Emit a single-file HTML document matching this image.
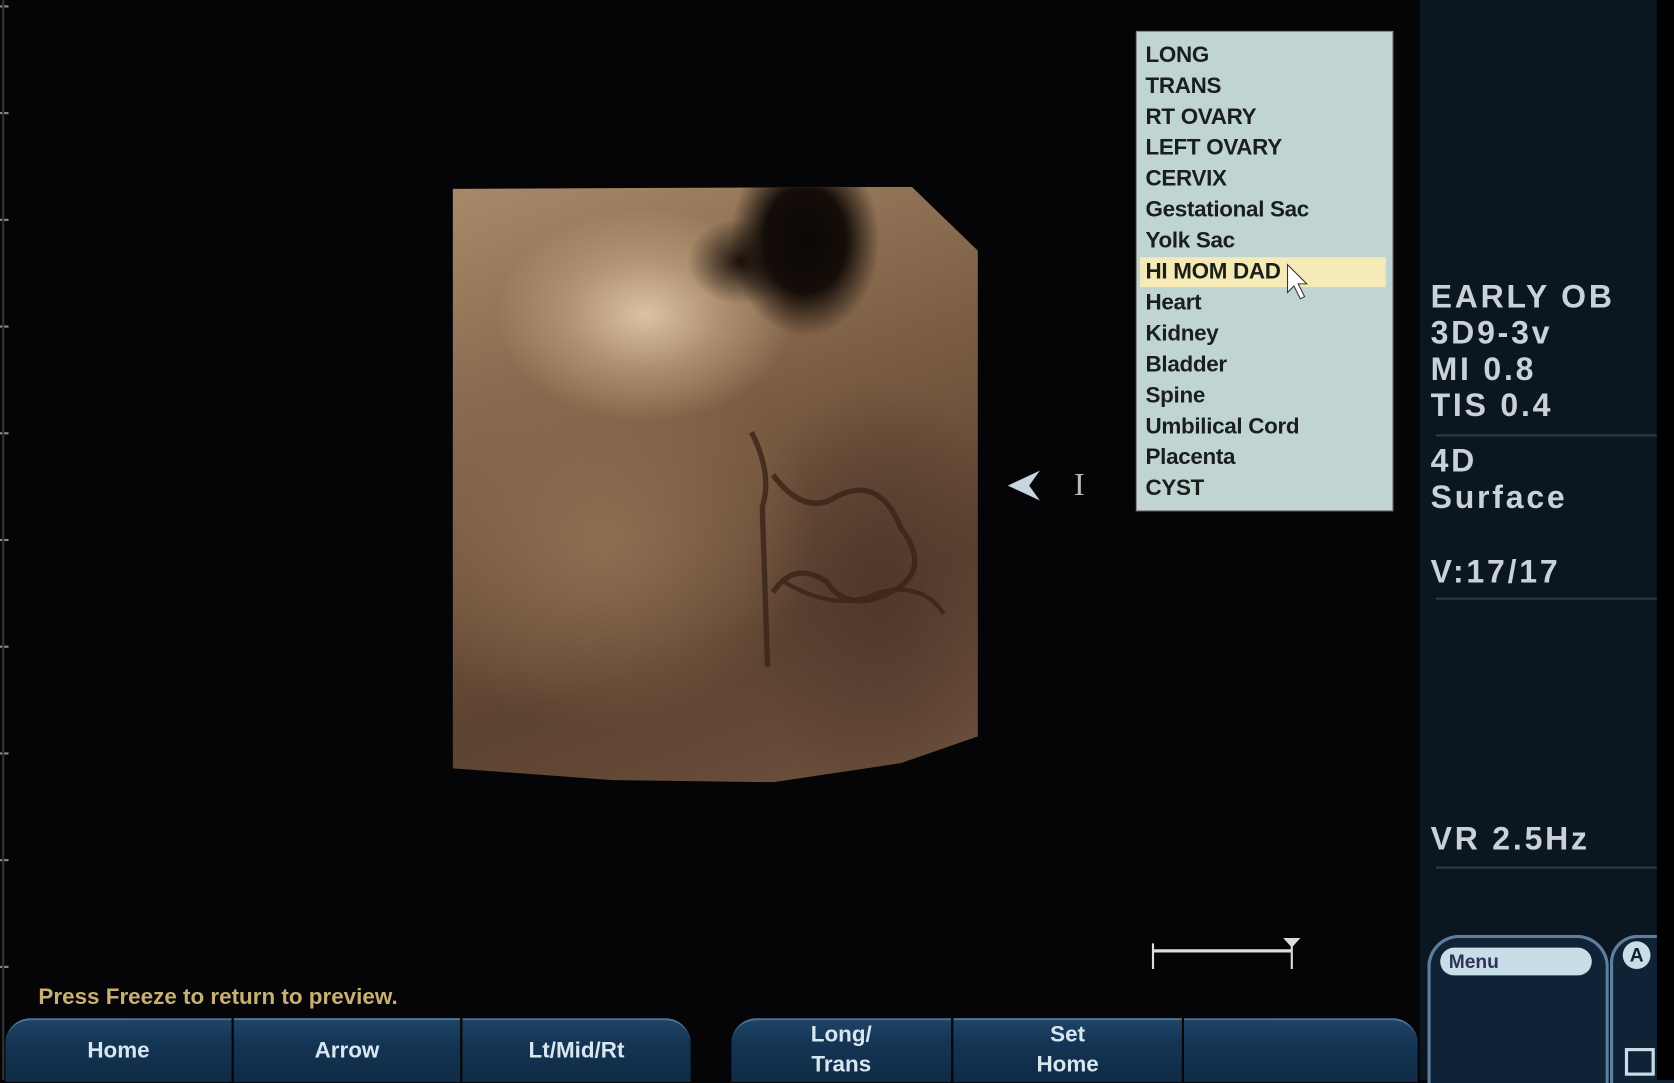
<!DOCTYPE html>
<html><head><style>
html,body{margin:0;padding:0;background:#050507;overflow:hidden}
#w{position:absolute;left:0;top:0;width:1568px;height:1012px;transform-origin:0 0;transform:scale(1.06760,1.06719);background:#050507;font-family:"Liberation Sans",sans-serif}
.a{position:absolute}
.tick{position:absolute;left:0;width:8px;height:2px;background:#8a8a8a}
.menu{left:1064px;top:29px;width:239px;height:448px;background:#bfd4d3;border:1px solid #888}
.mi{position:absolute;left:8px;font-size:21px;font-weight:bold;color:#1a1f1c;letter-spacing:-0.3px;line-height:29px}
.rp{position:absolute;left:1340px;color:#c9d2d6;font-size:30px;font-weight:bold;letter-spacing:2.6px;line-height:34px}
.hr{position:absolute;left:1345px;width:207px;height:2px;background:#2a3a48}
.btn{position:absolute;top:954px;height:58px;background:linear-gradient(#1e4466,#133453 40%,#0f2b45);color:#d8e6f0;font-size:21px;font-weight:bold;text-align:center;border-top:2px solid #4d7394}
</style></head><body><div id="w">
<div class="tick" style="top:5px"></div><div class="tick" style="top:105px"></div><div class="tick" style="top:205px"></div><div class="tick" style="top:305px"></div><div class="tick" style="top:405px"></div><div class="tick" style="top:505px"></div><div class="tick" style="top:605px"></div><div class="tick" style="top:705px"></div><div class="tick" style="top:805px"></div><div class="tick" style="top:905px"></div>
<div class="a" style="left:2px;top:0;width:2px;height:1012px;background:#333"></div>

<!-- 3D image -->
<div class="a" style="left:424px;top:175px;width:492px;height:560px;clip-path:polygon(0 2px,430px 0,492px 60px,492px 515px,420px 540px,300px 558px,150px 556px,0 545px);background:
radial-gradient(ellipse 70px 90px at 330px 50px,#0d0806 0%,#140d08 55%,transparent 100%),
radial-gradient(ellipse 50px 40px at 270px 70px,#1a110b 0%,transparent 100%),
radial-gradient(ellipse 140px 100px at 180px 120px,#dcc3a2 0%,rgba(200,170,135,.6) 50%,transparent 100%),
radial-gradient(ellipse 200px 180px at 140px 330px,#8e6f52 0%,transparent 100%),
radial-gradient(ellipse 130px 200px at 400px 380px,#50382a 0%,transparent 100%),
linear-gradient(160deg,#a7896a 0%,#7c5e44 40%,#5c4230 70%,#705240 100%)"></div>
<svg class="a" style="left:424px;top:175px" width="492" height="560"><g stroke="#3a2418" fill="none" opacity=".8"><path d="M300 270 q30 40 60 20 q40 -20 60 30 q30 40 -10 60 q-40 20 -60 -10 q-30 -20 -50 10" stroke-width="5"/><path d="M310 370 q50 30 90 10 q40 -10 60 20" stroke-width="4"/><path d="M280 230 q20 40 10 70 l5 150" stroke-width="5"/></g></svg>

<!-- menu -->
<div class="a menu">
<div class="a" style="left:3px;top:211px;width:230px;height:28px;background:#f6ebb6"></div>
<div class="mi" style="top:7px">LONG</div>
<div class="mi" style="top:36px">TRANS</div>
<div class="mi" style="top:65px">RT OVARY</div>
<div class="mi" style="top:94px">LEFT OVARY</div>
<div class="mi" style="top:123px">CERVIX</div>
<div class="mi" style="top:152px">Gestational Sac</div>
<div class="mi" style="top:181px">Yolk Sac</div>
<div class="mi" style="top:210px">HI MOM DAD</div>
<div class="mi" style="top:239px">Heart</div>
<div class="mi" style="top:268px">Kidney</div>
<div class="mi" style="top:297px">Bladder</div>
<div class="mi" style="top:326px">Spine</div>
<div class="mi" style="top:355px">Umbilical Cord</div>
<div class="mi" style="top:384px">Placenta</div>
<div class="mi" style="top:413px">CYST</div>
</div>
<svg class="a" style="left:1204px;top:246px" width="30" height="40"><path d="M2 2 L2 28 L8 22 L14 34 L18 32 L12 20 L20 20 Z" fill="#fff" stroke="#333"/></svg>

<svg class="a" style="left:942px;top:438px" width="40" height="35"><path d="M2 17 L32 3 L22 17 L32 31 Z" fill="#c9d6e0"/></svg>
<div class="a" style="left:1006px;top:438px;color:#bbb;font-size:30px;font-family:'Liberation Serif',serif">I</div>
<svg class="a" style="left:1074px;top:876px" width="150" height="40"><line x1="6" y1="15" x2="136" y2="15" stroke="#ddd" stroke-width="3"/><line x1="6" y1="8" x2="6" y2="32" stroke="#ddd" stroke-width="2"/><line x1="136" y1="4" x2="136" y2="32" stroke="#ddd" stroke-width="2"/><path d="M128 3 L144 3 L136 12 Z" fill="#ddd"/></svg>

<div class="a" style="left:36px;top:923px;color:#c7b172;font-size:21px;font-weight:bold">Press Freeze to return to preview.</div>

<!-- right panel -->
<div class="a" style="left:1330px;top:0;width:222px;height:1012px;background:#0b1620"></div>
<div class="rp" style="top:262px">EARLY OB<br>3D9-3v<br>MI 0.8<br>TIS 0.4</div>
<div class="hr" style="top:407px"></div>
<div class="rp" style="top:416px">4D<br>Surface</div>
<div class="rp" style="top:520px">V:17/17</div>
<div class="hr" style="top:560px"></div>
<div class="rp" style="top:770px">VR 2.5Hz</div>
<div class="hr" style="top:812px"></div>
<div class="a" style="left:1337px;top:876px;width:164px;height:136px;border-radius:30px 30px 0 0;border:3px solid #5b7f9d;border-bottom:none;background:#102236"></div>
<div class="a" style="left:1349px;top:888px;width:142px;height:26px;border-radius:13px;background:#c7dde8;color:#335;font-size:18px;font-weight:bold;line-height:26px;padding-left:8px;box-sizing:border-box">Menu</div>
<div class="a" style="left:1508px;top:876px;width:60px;height:136px;border-radius:26px 0 0 0;border:3px solid #5b7f9d;border-right:none;border-bottom:none;background:#102236"></div>
<div class="a" style="left:1520px;top:882px;width:26px;height:26px;border-radius:50%;background:#c7dde8;color:#123;font-weight:bold;text-align:center;line-height:26px;font-size:18px">A</div>
<div class="a" style="left:1522px;top:982px;width:22px;height:20px;border:3px solid #c7dde8"></div>
<div class="a" style="left:1552px;top:0;width:16px;height:1012px;background:#000"></div>

<!-- buttons -->
<div class="btn" style="left:5px;width:212px;border-radius:24px 0 0 0;line-height:58px">Home</div>
<div class="btn" style="left:219px;width:212px;line-height:58px">Arrow</div>
<div class="btn" style="left:433px;width:214px;border-radius:0 24px 0 0;line-height:58px">Lt/Mid/Rt</div>
<div class="btn" style="left:685px;width:206px;border-radius:24px 0 0 0;line-height:28px">Long/<br>Trans</div>
<div class="btn" style="left:893px;width:214px;line-height:28px">Set<br>Home</div>
<div class="btn" style="left:1109px;width:219px;border-radius:0 24px 0 0"></div>
</div></body></html>
